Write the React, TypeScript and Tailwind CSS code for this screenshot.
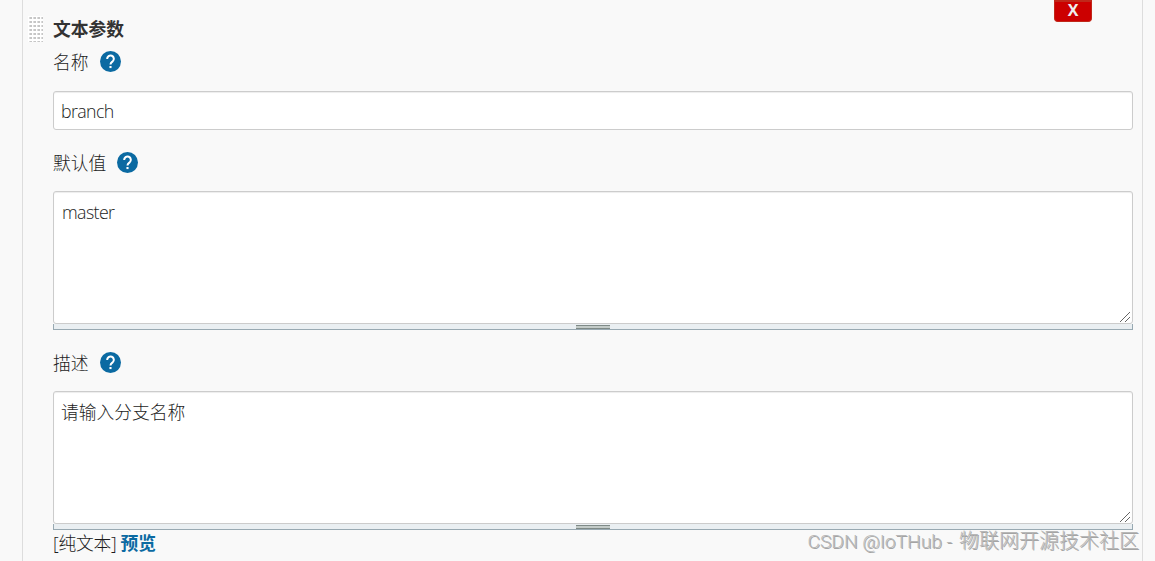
import { useState } from 'react';

interface FieldLabelProps {
  text: string;
}

interface TextBoxProps {
  value: string;
  onChange: (value: string) => void;
  className?: string;
}

function FieldLabel({ text }: FieldLabelProps) {
  return (
    <div className="flex h-6 items-center gap-[11px]">
      <span>{text}</span>
      <button type="button" aria-label="help" className="relative -top-px">
        <svg width="21" height="21" viewBox="0 0 22 22" className="block">
          <circle cx="11" cy="11" r="11" fill="#0b6aa2" />
          <path
            d="M7.5 8.4a3.5 3.5 0 1 1 5.7 2.5c-1.4 1.1-2.2 1.6-2.2 3.2"
            fill="none"
            stroke="#fff"
            strokeWidth="2.1"
          />
          <rect x="9.9" y="15.7" width="2.2" height="2.2" fill="#fff" />
        </svg>
      </button>
    </div>
  );
}

function TextBox({ value, onChange, className = '' }: TextBoxProps) {
  return (
    <div className="relative">
      <textarea
        value={value}
        onChange={(e) => onChange(e.target.value)}
        className={`block h-[133px] w-full resize-none rounded-[3px] border border-[#ccc] bg-white px-2 py-2 leading-6 shadow-[inset_0_1px_1px_rgba(0,0,0,0.075)] outline-none ${className}`}
      />
      {/* Corner lines */}
      <svg
        width="10"
        height="10"
        shapeRendering="crispEdges"
        className="pointer-events-none absolute right-[3px] bottom-[8px]"
      >
        <path d="M0 10L10 0M5 10L10 5" stroke="#666" />
      </svg>
      {/* Drag handle */}
      <div className="flex h-[6px] cursor-row-resize justify-center border border-t-0 border-[#98a9b2] bg-[#eaeff2]">
        <div className="mt-px h-1 w-[34px] border-y border-[#7f8a87] bg-[#c3cbc8]" />
      </div>
    </div>
  );
}

// Dotted drag grip
function Grip() {
  return (
    <svg width="15" height="26" className="block cursor-move">
      <defs>
        <pattern id="dots" width="4" height="4" patternUnits="userSpaceOnUse">
          <rect width="4" height="4" fill="#fff" />
          <rect x="1" y="1" width="3" height="2" fill="#dcdcdc" />
          <rect x="2" y="1" width="2" height="2" fill="#c6c6c6" />
        </pattern>
      </defs>
      <rect width="15" height="26" fill="url(#dots)" />
    </svg>
  );
}

export default function App() {
  const [name, setName] = useState('branch');
  const [defaultValue, setDefaultValue] = useState('master');
  const [description, setDescription] = useState('请输入分支名称');

  return (
    <div className="relative h-[561px] overflow-hidden bg-[#f9f9f9] pr-3 pl-[22px] font-['Open_Sans','Noto_Sans_CJK_SC',sans-serif] text-[17.75px] leading-6 font-light text-[#1c1c1c]">
      <div className="relative flex h-full border-x border-[#ddd] pr-[9px] pl-[5px]">
        <div className="mt-4 w-[25px] shrink-0">
          <Grip />
        </div>

        <div className="min-w-0 flex-1 pt-[17px]">
          <h2 className="h-6 font-bold text-[#333]">文本参数</h2>

          <div className="mt-[9px]">
            <FieldLabel text="名称" />
            <input
              type="text"
              value={name}
              onChange={(e) => setName(e.target.value)}
              className="mt-[17px] block h-[39px] w-full rounded-[3px] border border-[#ccc] bg-white px-[7px] tracking-[-0.6px] shadow-[inset_0_1px_1px_rgba(0,0,0,0.075)] outline-none"
            />
          </div>

          <div className="mt-[21px] space-y-4">
            <FieldLabel text="默认值" />
            <TextBox value={defaultValue} onChange={setDefaultValue} className="tracking-[-0.6px]" />
          </div>

          <div className="mt-[21px] space-y-4">
            <FieldLabel text="描述" />
            <TextBox value={description} onChange={setDescription} className="indent-[-1px]" />
          </div>

          <div className="mt-px flex gap-1">
            <span className="tracking-[-0.2px]">[纯文本]</span>
            <a href="#" className="font-bold text-[#0b6aa2]">预览</a>
          </div>
        </div>

        <button
          type="button"
          className="absolute top-0 right-[50px] h-[22px] w-[38px] rounded-b-[4px] border border-t-2 border-[#c0281a] bg-[#c00] pb-[3px] text-base leading-4 font-bold text-[#eee]"
        >
          X
        </button>
      </div>

      <div className="absolute right-4 bottom-[5px] flex items-baseline gap-[7px] font-['Roboto','Noto_Sans_CJK_SC',sans-serif] text-[20px] leading-7 whitespace-nowrap text-[#b8b8b8] [text-shadow:1px_1px_0_#a4a4a4]">
        <span className="text-[19.2px]">CSDN @IoTHub -</span>
        <span>物联网开源技术社区</span>
      </div>
    </div>
  );
}
